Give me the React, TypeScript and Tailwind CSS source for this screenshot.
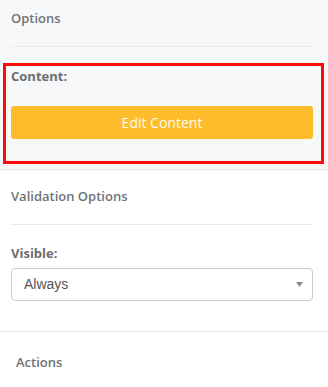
export default function App() {
	return (
		<div className="w-[328px] h-[387px] bg-white overflow-hidden font-['Open_Sans',sans-serif] text-[13px]">
			{/* Options panel */}
			<div className="bg-[#f7f8fa] border-b border-[#e4e6e9] pb-[5px]">
				<div className="pl-[11px] pr-[15px] pt-[9px]">
					<div className="h-[18px] leading-[18px] font-semibold text-[#707377]">Options</div>
					<div className="mt-[19px] h-px bg-[#e8eaed]" />
				</div>
				<div className="mt-[16px] ml-[3px] mr-[4px] border-[3px] border-[#ff0a0a] pl-[5px] pr-[8px] pt-[1px] pb-[22px]">
					<div className="h-[18px] leading-[18px] font-bold text-[#6b6e72]">Content:</div>
					<button className="mt-[21px] w-full h-[33px] rounded-[3px] bg-[#fdbd2b] text-[#fffaf0] text-[14px] leading-[33px] text-center">
						Edit Content
					</button>
				</div>
			</div>

			{/* Validation */}
			<div className="pl-[11px] pr-[15px] pt-[17px]">
				<div className="h-[18px] leading-[18px] font-semibold text-[#707377]">Validation Options</div>
				<div className="mt-[19px] h-px bg-[#e8eaed]" />
				<div className="mt-[19px] h-[18px] leading-[18px] font-bold text-[#6b6e72]">Visible:</div>
				<div className="mt-[6px] h-[33px] rounded-[4px] border border-[#cccccc] bg-white flex items-center justify-between pl-[12px] pr-[9px] font-['Liberation_Sans',Arial,sans-serif] text-[14px] text-[#555555]">
					<span>Always</span>
					<svg width="7" height="5" viewBox="0 0 7 5">
						<path d="M0 0 L7 0 L3.5 5 Z" fill="#8a8a8a" />
					</svg>
				</div>
			</div>
			<div className="mt-[30px] h-px bg-[#e6e6e6]" />
			<div className="pl-[16px] mt-[21px] h-[18px] leading-[18px] font-semibold text-[#707377]">Actions</div>
		</div>
	);
}
